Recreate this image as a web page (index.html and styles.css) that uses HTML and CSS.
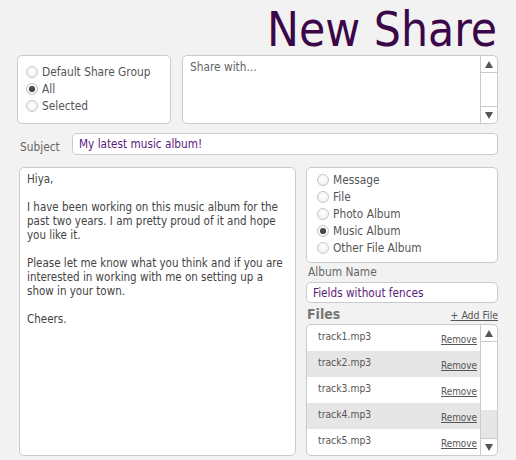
FILE: index.html
```html
<!DOCTYPE html>
<html>
<head>
<meta charset="utf-8">
<title>New Share</title>
<link rel="stylesheet" href="styles.css">
</head>
<body>
<div class="page">
  <h1 class="title">New Share</h1>

  <div class="row-top">
    <div class="box group">
      <div class="radio"><span class="dot"></span>Default Share Group</div>
      <div class="radio"><span class="dot checked"></span>All</div>
      <div class="radio"><span class="dot"></span>Selected</div>
    </div>
    <div class="box share">
      <div class="share-text">Share with...</div>
      <div class="scrollbar">
        <div class="sb-up"><span class="tri-up"></span></div>
        <div class="sb-track"></div>
        <div class="sb-down"><span class="tri-down"></span></div>
      </div>
    </div>
  </div>

  <div class="row-subject">
    <div class="label subject-label">Subject</div>
    <div class="box field subject-field">My latest music album!</div>
  </div>

  <div class="row-main">
    <div class="box message">
      <p>Hiya,</p>
      <p>I have been working on this music album for the past two years. I am pretty proud of it and hope you like it.</p>
      <p>Please let me know what you think and if you are interested in working with me on setting up a show in your town.</p>
      <p>Cheers.</p>
    </div>
    <div class="side">
      <div class="box types">
        <div class="radio"><span class="dot"></span>Message</div>
        <div class="radio"><span class="dot"></span>File</div>
        <div class="radio"><span class="dot"></span>Photo Album</div>
        <div class="radio"><span class="dot checked"></span>Music Album</div>
        <div class="radio"><span class="dot"></span>Other File Album</div>
      </div>
      <div class="label album-label">Album Name</div>
      <div class="box field album-field">Fields without fences</div>
      <div class="files-head">
        <span class="files-title">Files</span>
        <a class="add-file">+ Add File</a>
      </div>
      <div class="box files">
        <div class="file-rows">
          <div class="file-row"><span class="fname">track1.mp3</span><a class="remove">Remove</a></div>
          <div class="file-row alt"><span class="fname">track2.mp3</span><a class="remove">Remove</a></div>
          <div class="file-row"><span class="fname">track3.mp3</span><a class="remove">Remove</a></div>
          <div class="file-row alt"><span class="fname">track4.mp3</span><a class="remove">Remove</a></div>
          <div class="file-row"><span class="fname">track5.mp3</span><a class="remove">Remove</a></div>
        </div>
        <div class="scrollbar">
          <div class="sb-up"><span class="tri-up"></span></div>
          <div class="sb-track files-track"><div class="sb-thumb"></div></div>
          <div class="sb-down"><span class="tri-down"></span></div>
        </div>
      </div>
    </div>
  </div>
</div>
</body>
</html>
```

FILE: styles.css
```css
* { box-sizing: border-box; }

body {
  margin: 0;
  background: #f2f2f2;
  font-family: "DejaVu Sans Condensed", "DejaVu Sans", sans-serif;
  color: #555;
}

.page {
  width: 516px;
  height: 460px;
  padding: 0 18px 0 17px;
  overflow: hidden;
}

.title {
  margin: 0;
  padding-top: 5px;
  height: 55px;
  font-size: 47.5px;
  line-height: 50px;
  font-weight: normal;
  text-align: right;
  color: #3b0749;
  padding-right: 1px;
}

.box {
  background: #fff;
  border: 1px solid #cbcbcb;
  border-radius: 5px;
}

.row-top {
  display: flex;
  gap: 11px;
  height: 69px;
}

.group {
  width: 154px;
  padding: 7px 8px;
}

.radio {
  display: flex;
  align-items: center;
  gap: 4px;
  height: 17px;
  font-size: 11.8px;
  color: #555;
  white-space: nowrap;
}

.dot {
  position: relative;
  width: 12px;
  height: 12px;
  flex: none;
  border-radius: 50%;
  border: 1px solid #c6c6c6;
  background: radial-gradient(circle at 50% 40%, #ffffff 0%, #f4f4f4 60%, #e6e6e6 100%);
}

.dot.checked::after {
  content: "";
  position: absolute;
  left: 2px;
  top: 2px;
  width: 6px;
  height: 6px;
  border-radius: 50%;
  background: radial-gradient(circle at 50% 40%, #555 0%, #2a2a2a 100%);
}

.share {
  flex: 1;
  display: flex;
  overflow: hidden;
}

.share-text {
  flex: 1;
  padding: 4px 7px;
  font-size: 11.8px;
  color: #666;
}

.scrollbar {
  width: 17px;
  flex: none;
  border-left: 1px solid #cbcbcb;
  display: flex;
  flex-direction: column;
}

.sb-up, .sb-down {
  height: 17px;
  flex: none;
  display: flex;
  align-items: center;
  justify-content: center;
}

.sb-up { border-bottom: 1px solid #cbcbcb; }
.sb-down { border-top: 1px solid #cbcbcb; }

.sb-track {
  flex: 1;
  display: flex;
  flex-direction: column;
  justify-content: flex-end;
}

.sb-thumb {
  height: 28px;
  background: #e6e6e6;
}

.tri-up, .tri-down {
  width: 0;
  height: 0;
  border-left: 4px solid transparent;
  border-right: 4px solid transparent;
}

.tri-up { border-bottom: 7px solid #555; }
.tri-down { border-top: 7px solid #555; }

.row-subject {
  display: flex;
  align-items: center;
  margin-top: 9px;
  height: 22px;
}

.label {
  font-size: 11.8px;
  color: #666;
}

.subject-label {
  width: 55px;
  padding-left: 3px;
  padding-top: 6px;
}

.field {
  font-size: 11.7px;
  color: #5b1a7c;
  padding: 0 6px;
  display: flex;
  align-items: center;
}

.subject-field {
  flex: 1;
  height: 22px;
}

.row-main {
  display: flex;
  gap: 10px;
  margin-top: 12px;
  padding-left: 2px;
}

.message {
  width: 277px;
  height: 289px;
  padding: 4px 7px 4px 7px;
  font-size: 11.5px;
  line-height: 14px;
  color: #444;
}

.message p {
  margin: 0 0 14px 0;
}

.side {
  width: 192px;
  display: flex;
  flex-direction: column;
}

.types {
  height: 96px;
  padding: 3px 10px;
}

.album-label {
  height: 19px;
  padding-left: 2px;
  padding-top: 2px;
}

.album-field {
  height: 21px;
}

.files-head {
  height: 21px;
  display: flex;
  align-items: flex-end;
  justify-content: space-between;
  padding: 0 0 3px 1px;
}

.files-title {
  font-size: 14px;
  font-weight: bold;
  color: #777;
  line-height: 14px;
}

.add-file {
  font-size: 10.4px;
  color: #555;
  text-decoration: underline;
  line-height: 12px;
}

.file-rows {
  flex: 1;
}

.files {
  height: 132px;
  display: flex;
  overflow: hidden;
}

.file-row {
  height: 26px;
  display: flex;
  justify-content: space-between;
  padding: 4px 3px 0 11px;
  color: #555;
}

.file-row.alt {
  background: #e6e6e6;
}

.fname {
  font-size: 10.3px;
  line-height: 14px;
}

.remove {
  font-size: 9.9px;
  line-height: 14px;
  padding-top: 4px;
  text-decoration: underline;
  color: #555;
}
```
